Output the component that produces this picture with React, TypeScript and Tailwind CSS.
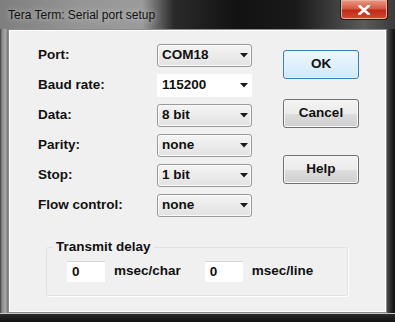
import React from 'react';

const FONT = "font-['Liberation_Sans',Arial,sans-serif]";

type ComboProps = { value: string; editable?: boolean };

function Arrow() {
  return (
    <svg width="8" height="5" viewBox="0 0 8 5" className="shrink-0">
      <path d="M0 0 H8 L4 4.5 Z" fill="#1a1a1a" />
    </svg>
  );
}

function Combo({ value, editable }: ComboProps) {
  return (
    <div
      className={
        editable
          ? 'flex h-[23px] w-[95px] items-center justify-between bg-white pl-[5px] pr-[4px]'
          : 'flex h-[23px] w-[95px] items-center justify-between rounded-[3px] border border-[#9a9a9a] bg-[linear-gradient(to_bottom,#f4f4f4,#e2e2e2)] pl-[4px] pr-[3px] shadow-[inset_0_0_0_1px_#fafafa]'
      }
    >
      <span className="text-[13.5px] font-bold text-[#111]">{value}</span>
      <Arrow />
    </div>
  );
}

function Row({ label, value, editable }: { label: string; value: string; editable?: boolean }) {
  return (
    <div className="flex h-[23px] items-center">
      <span className="w-[119px] text-[13.5px] font-bold text-[#111]">{label}</span>
      <Combo value={value} editable={editable} />
    </div>
  );
}

function DlgButton({ label, primary }: { label: string; primary?: boolean }) {
  return (
    <button
      type="button"
      className={
        primary
          ? 'flex h-[29px] w-[76px] items-center justify-center rounded-[3px] border border-[#3c7fb1] bg-[linear-gradient(to_bottom,#eef7fd,#cfe9fa)] text-[13.5px] font-bold text-[#111] shadow-[inset_0_0_0_1px_#e2f2fc]'
          : 'flex h-[29px] w-[76px] items-center justify-center rounded-[3px] border border-[#707070] bg-[linear-gradient(to_bottom,#f3f3f3_0%,#ebebeb_50%,#dddddd_51%,#cfcfcf_100%)] text-[13.5px] font-bold text-[#111] shadow-[inset_0_0_0_1px_#f8f8f8]'
      }
    >
      {label}
    </button>
  );
}

function DelayField({ value, unit }: { value: string; unit: string }) {
  return (
    <div className="flex items-center">
      <div className="flex h-[21px] w-[38px] items-center border-t border-[#d6d6d6] bg-white pl-[5px] text-[13.5px] font-bold text-[#111]">
        {value}
      </div>
      <span className="ml-[9px] text-[13.5px] font-bold text-[#111]">{unit}</span>
    </div>
  );
}

export default function App() {
  return (
    <div
      className={`${FONT} flex h-[322px] w-[395px] flex-col overflow-hidden bg-[linear-gradient(to_right,#7e7e7e_0%,#959595_20%,#9b9b9b_36%,#2a2a2a_44%,#121212_60%,#1a1a1a_75%,#5a5a5a_92%,#3a3a3a_100%)]`}
    >
      {/* title bar */}
      <div className="flex h-[29px] shrink-0 items-start">
        <span className="ml-[8px] mt-[8px] text-[12px] leading-[14px] text-[#111] [text-shadow:0_0_6px_#d0d0d0]">
          Tera Term: Serial port setup
        </span>
        <div className="ml-auto mr-[7px] flex h-[20px] w-[48px] items-center justify-center rounded-b-[4px] border border-t-0 border-[#3b1010] bg-[linear-gradient(to_bottom,#eb9a88_0%,#d65a40_45%,#c02a18_55%,#d44a2e_100%)] shadow-[inset_0_0_0_1px_#e9b0a0]">
          <svg width="12" height="10" viewBox="0 0 12 10">
            <path d="M1.5 1 L10.5 9 M10.5 1 L1.5 9" stroke="#fff" strokeWidth="2.6" strokeLinecap="square" />
          </svg>
        </div>
      </div>

      <div className="flex h-[284px] shrink-0">
        <div className="w-[8px] bg-[linear-gradient(to_right,#3a3a3a_0%,#8c8c8c_25%,#a8a8a8_70%,#707070_100%)]" />
        {/* client area */}
        <div className="flex flex-1 flex-col border border-[#8a8a8a] bg-[#f0f0f0] shadow-[inset_0_0_0_1px_#ffffff]">
          <div className="flex pl-[29px] pt-[14px]">
            <div className="flex flex-col gap-[7px]">
              <Row label="Port:" value="COM18" />
              <Row label="Baud rate:" value="115200" editable />
              <Row label="Data:" value="8 bit" />
              <Row label="Parity:" value="none" />
              <Row label="Stop:" value="1 bit" />
              <Row label="Flow control:" value="none" />
            </div>
            <div className="ml-[31px] flex flex-col pt-[6px]">
              <DlgButton label="OK" primary />
              <div className="mt-[20px]">
                <DlgButton label="Cancel" />
              </div>
              <div className="mt-[27px]">
                <DlgButton label="Help" />
              </div>
            </div>
          </div>

          {/* transmit delay group */}
          <div className="relative ml-[37px] mt-[30px] h-[49px] w-[302px] rounded-[2px] border border-[#dde2e6] shadow-[1px_1px_0_#ffffff]">
            <span className="absolute left-[6px] top-[-10px] bg-[#f0f0f0] px-[3px] text-[13.5px] font-bold leading-[18px] text-[#111]">
              Transmit delay
            </span>
            <div className="flex gap-[24px] pl-[20px] pt-[13px]">
              <DelayField value="0" unit="msec/char" />
              <DelayField value="0" unit="msec/line" />
            </div>
          </div>
        </div>
        <div className="w-[8px] bg-[linear-gradient(to_right,#4a4a4a_0%,#2a2a2a_50%,#101010_100%)]" />
      </div>

      <div className="flex-1 border-t border-[#c8c8c8] bg-[linear-gradient(to_bottom,#2a2a2a,#111111)]" />
    </div>
  );
}
